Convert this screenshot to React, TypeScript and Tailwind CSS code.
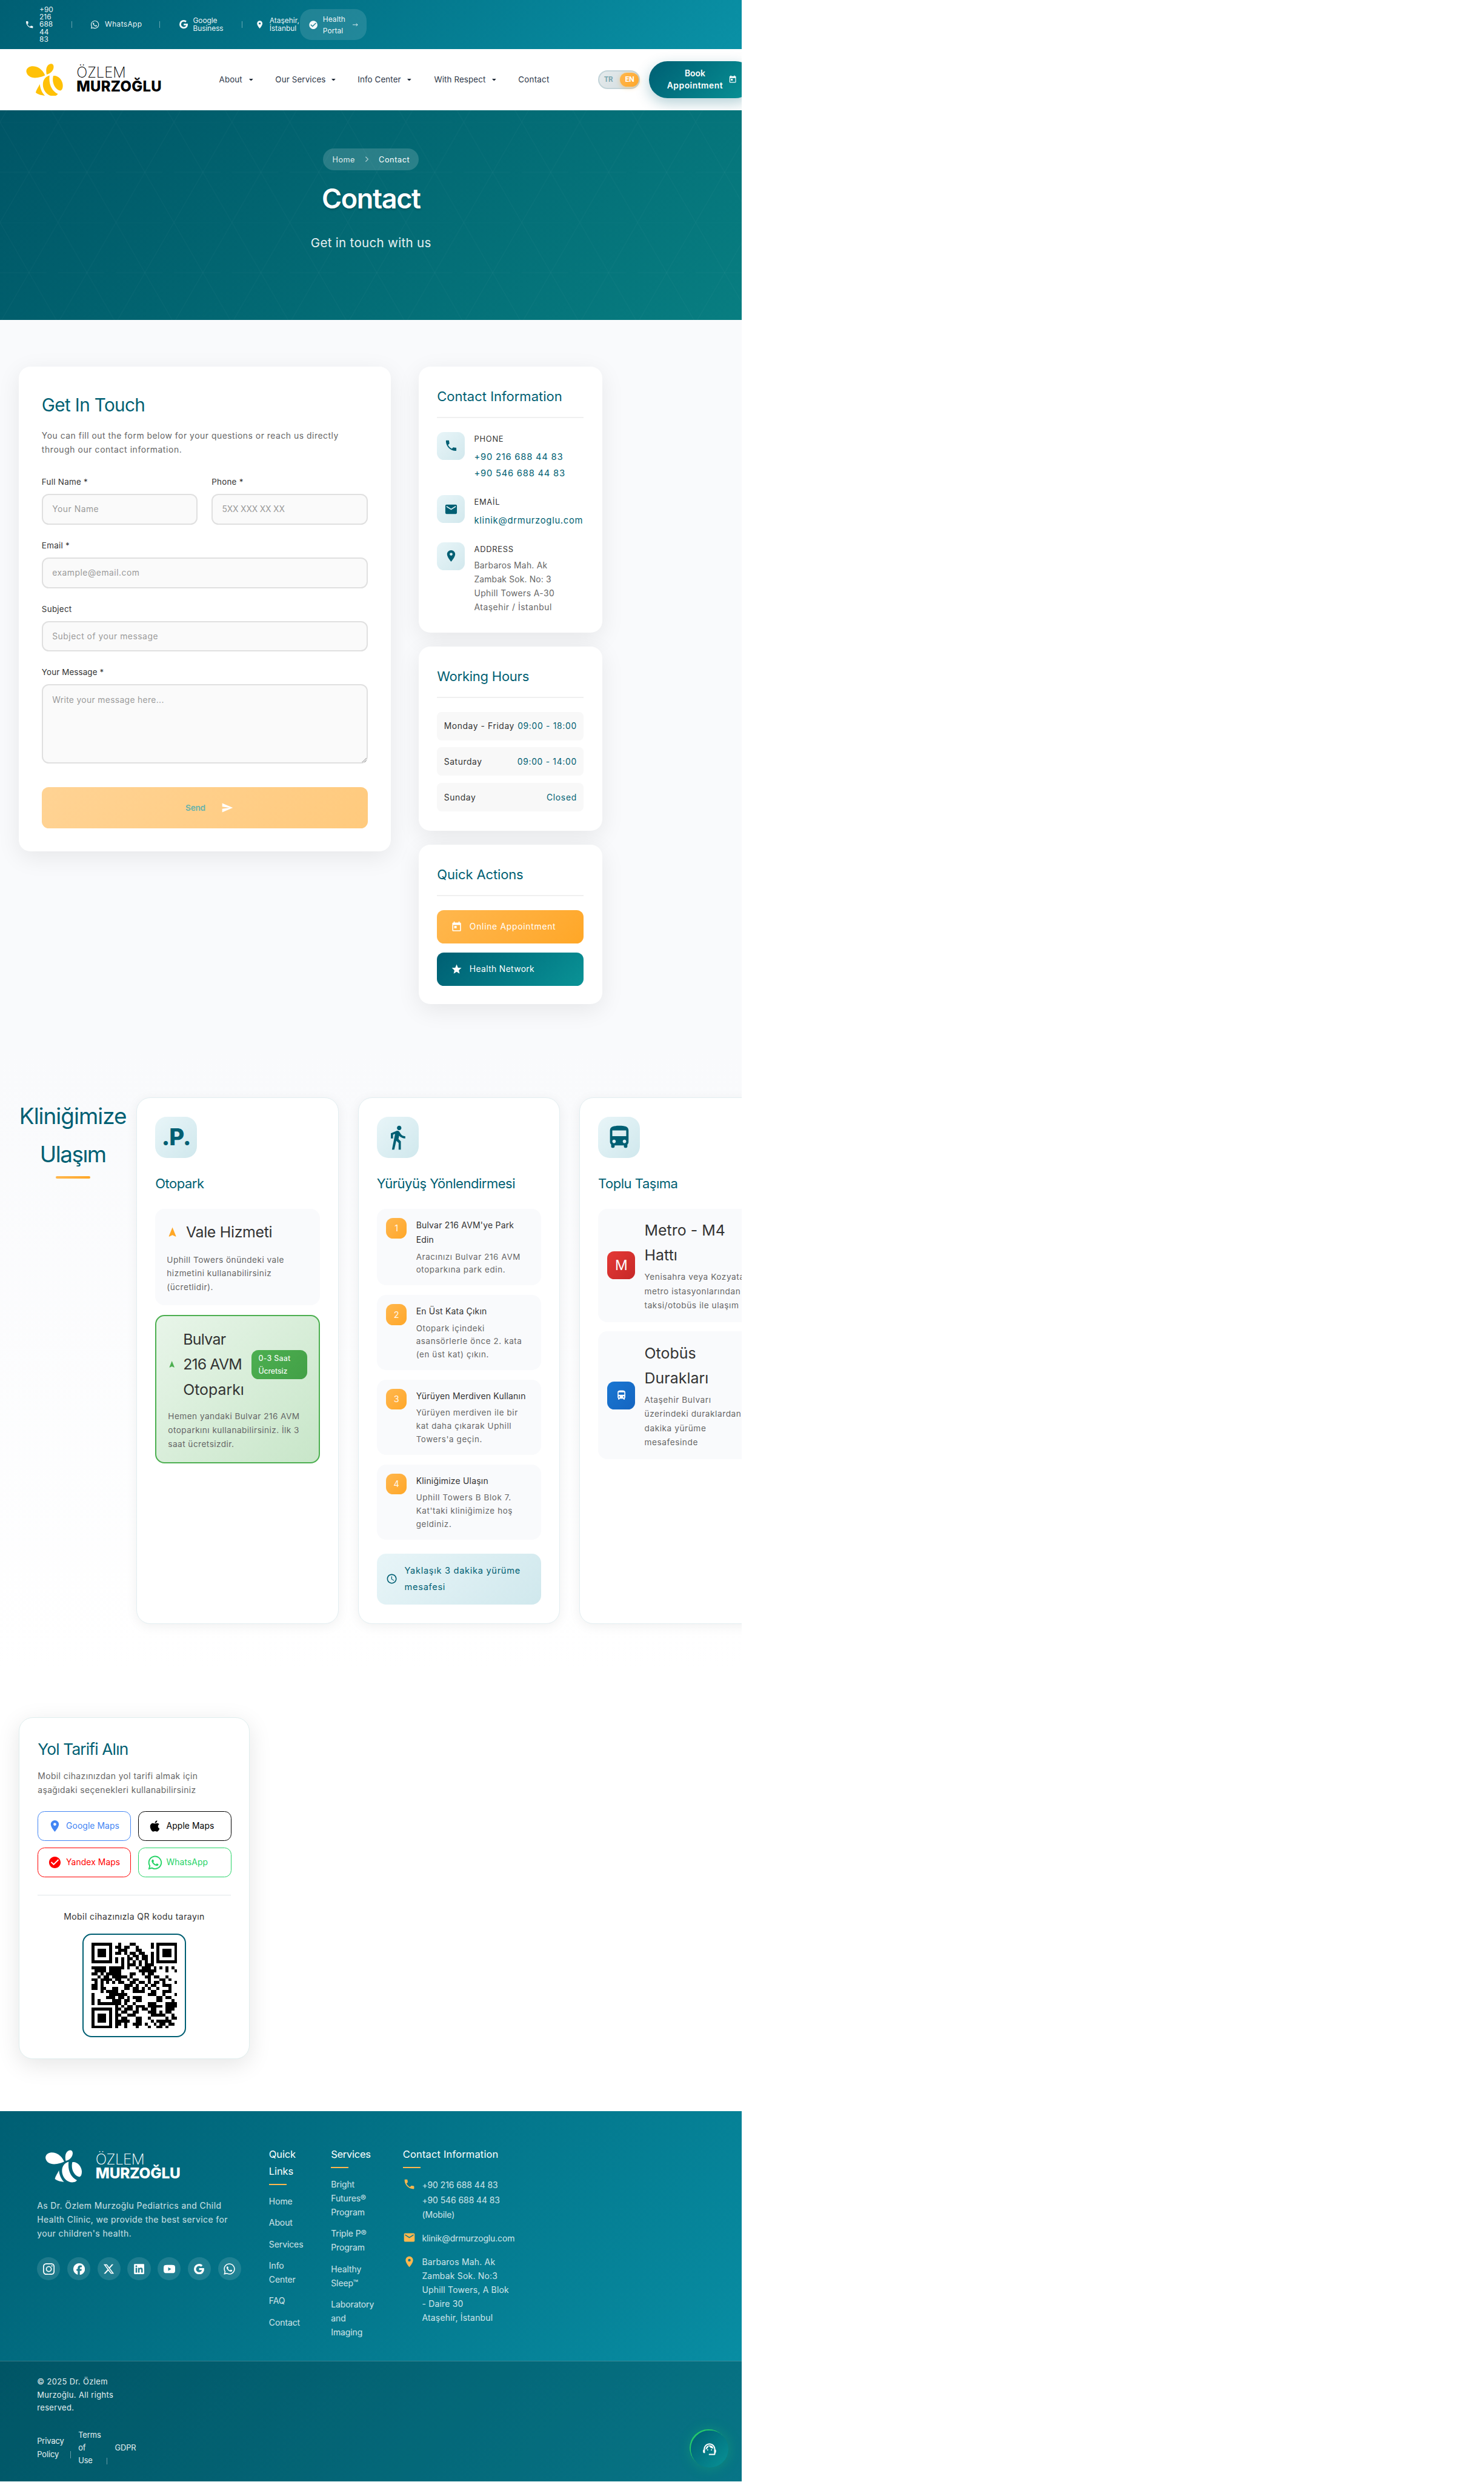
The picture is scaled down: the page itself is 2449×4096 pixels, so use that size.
import type { ReactNode } from 'react';
import {
  MdPhone, MdEmail, MdLocationOn, MdToday, MdSend, MdStar, MdCheckCircle, MdNavigation,
  MdDirectionsWalk, MdDirectionsBus, MdSupportAgent, MdAccessTime,
} from 'react-icons/md';
import { FaWhatsapp, FaXTwitter, FaLinkedin, FaApple } from 'react-icons/fa6';
import { BsGoogle } from 'react-icons/bs';
import { SiInstagram, SiFacebook, SiYoutube } from 'react-icons/si';

/** One unbroken line of text. */
function T({ c = '', children }: { c?: string; children: ReactNode }) {
  return <span className={'block w-max whitespace-nowrap ' + c}>{children}</span>;
}

function Lines({ items }: { items: string[] }) {
  return <>{items.map((t) => <T key={t}>{t}</T>)}</>;
}

function Bee({ className }: { className: string }) {
  return (
    <svg viewBox="0 0 189 167" className={'shrink-0 ' + className} fill="currentColor">
      <path d="M97 60C80 20 45 10 25 14C8 17-2 30 1 44C5 62 22 73 45 73C65 73 85 66 97 60Z" />
      <path d="M105 56C100 35 103 12 118 4C130-3 142 2 141 18C140 36 125 52 105 56Z" />
      <path d="M120 61C92 68 82 95 87 120C93 150 120 172 148 166C155 165 160 160 163 156C130 140 115 105 120 61Z" />
      <path d="M139 63C160 58 185 80 188 108C189 125 185 135 176 139C150 135 130 100 139 63Z" />
      <path d="M70 105C60 125 50 138 49 150C62 160 80 164 96 165C82 150 72 130 70 105Z" />
    </svg>
  );
}

const qrRows = [
  '11111110010001100000101111111',
  '10000010110110010000101000001',
  '10111010011100011000001011101',
  '10111010110101101100101011101',
  '10111010000010110110101011101',
  '10000010101011010110101000001',
  '11111110101010101010101111111',
  '00000000001011101011100000000',
  '11111011111010010111010101010',
  '01111011110000001111110001001',
  '11010111110001100101100000000',
  '00101101111101000011011001000',
  '11011110110010110001000110100',
  '01010101011001101101011010001',
  '11010000000111010010110011100',
  '11011001100110110101001000100',
  '00010111101000111100110011100',
  '10000011111100000001110010001',
  '10000111011010111000001101100',
  '10100001110110011000001100010',
  '10111111110100100001110001111',
  '00000000101011011101111101111',
  '11111110110111010110110001110',
  '10000010101100110001110101100',
  '10111010110011100000111110010',
  '10111010101100011001000001011',
  '10111010111110011000101111100',
  '10000010110100111010010110110',
  '11111110100100010001001101000',
];

function Qr() {
  return (
    <svg viewBox="0 0 29 29" className="size-[148px]" shapeRendering="crispEdges">
      {qrRows.flatMap((r, y) => [...r].map((v, x) => (v === '1' ? <rect key={`${x}-${y}`} x={x} y={y} width="1" height="1" /> : null)))}
    </svg>
  );
}

const cardShadow = 'shadow-[0_10px_40px_rgba(0,0,0,0.08)]';

function TopBar() {
  return (
    <div className="flex h-[85px] items-center bg-linear-135 from-[#005f73] to-[#0a91a6] text-[12.5px] leading-[13px] text-white/95">
      <div className="ml-[43px] flex w-[80px] items-center gap-[9px]">
        <MdPhone size={16} />
        <div><Lines items={['+90', '216', '688', '44', '83']} /></div>
      </div>
      <div className="h-[12px] w-px bg-white/40" />
      <div className="ml-[32px] flex w-[119px] items-center gap-[9px]">
        <FaWhatsapp size={16} />
        <T c="tracking-[0.029em]">WhatsApp</T>
      </div>
      <div className="h-[12px] w-px bg-white/40" />
      <div className="ml-[33px] flex w-[108px] items-center gap-[9px]">
        <BsGoogle size={15} />
        <div className="tracking-[-0.006em]"><Lines items={['Google', 'Business']} /></div>
      </div>
      <div className="h-[12px] w-px bg-white/40" />
      <div className="ml-[22px] flex w-[77px] items-center gap-[9px]">
        <MdLocationOn size={16} className="shrink-0" />
        <div><Lines items={['Ataşehir,', 'İstanbul']} /></div>
      </div>
      <div className="flex h-[53px] w-[116px] items-center rounded-[20px] bg-white/12 pl-[15px] leading-[20px]">
        <MdCheckCircle size={17} />
        <div className="ml-[8px] w-[52px] tracking-[0.008em]"><Lines items={['Health', 'Portal']} /></div>
        <svg viewBox="0 0 9 6" className="w-[9px]" fill="none" stroke="currentColor" strokeWidth="0.9"><path d="M0 3H8.5M6 0.7L8.5 3L6 5.3" /></svg>
      </div>
    </div>
  );
}

function NavItem({ cell, label, arrow = true }: { cell: string; label: string; arrow?: boolean }) {
  return (
    <div className={'flex items-center justify-between ' + cell}>
      <T>{label}</T>
      {arrow && <svg viewBox="0 0 7 4" className="w-[7px]" fill="#1f2937"><path d="M0 0H7L3.5 4Z" /></svg>}
    </div>
  );
}

function Header() {
  return (
    <div className="flex h-[105px] items-center bg-white">
      <Bee className="ml-[45px] h-[56px] w-[64px] text-[#ffc107]" />
      <div className="ml-[23px] w-[222px] shrink-0 text-[25px] leading-[23.7px] text-black">
        <T c="font-extralight tracking-[-0.004em]">ÖZLEM</T>
        <T c="font-extrabold tracking-[0.011em]">MURZOĞLU</T>
      </div>
      <div className="ml-[24px] flex w-[654px] shrink-0 text-[14px] leading-[24px] tracking-[0.008em] text-[#2d3748]">
        <NavItem cell="w-[59px] mr-[38px]" label="About" />
        <NavItem cell="w-[104px] mr-[38px]" label="Our Services" />
        <NavItem cell="w-[93px] mr-[39px]" label="Info Center" />
        <NavItem cell="w-[107px] mr-[38px]" label="With Respect" />
        <NavItem cell="w-[60px] tracking-[0.02em]" label="Contact" arrow={false} />
      </div>
      <div className="flex h-[32px] w-[72px] shrink-0 items-center justify-between rounded-full border-[2.1px] border-[#c3d4d9] bg-linear-135 from-[#e6ebed] to-[#cfdadd] pl-[8px] text-[12px] font-bold tracking-[-0.045em]">
        <T c="text-[#7fa8b1]">TR</T>
        <div className="flex h-[24px] w-[32px] items-center justify-center rounded-[12px] bg-linear-135 from-[#ffb74d] to-[#ffa726] text-white shadow-[0_2px_8px_rgba(255,167,38,0.4)]"><T>EN</T></div>
      </div>
      <div className="ml-[16px] flex h-[64px] w-[180px] shrink-0 items-center rounded-[32px] bg-linear-135 from-[#005f73] to-[#0a9396] pl-[31px] text-[14.5px] leading-[20px] font-semibold text-white shadow-[0_8px_24px_rgba(0,95,115,0.3)]">
        <div className="flex w-[96px] flex-col items-center"><T>Book</T><T c="tracking-[0.036em]">Appointment</T></div>
        <MdToday size={15} className="ml-[10px]" />
      </div>
    </div>
  );
}

function Hero() {
  return (
    <div className="relative flex h-[362px] flex-col items-center bg-linear-135 from-[#005566] to-[#087e81] pt-[66px] text-white">
      <svg className="absolute inset-0 h-full w-full">
        <defs>
          <pattern id="tri" width="100" height="173.2" patternUnits="userSpaceOnUse" patternTransform="translate(0 20.4)">
            <path d="M0 0H80M0 86.6H80M0 0L50 86.6L100 0M0 173.2L50 86.6L100 173.2" fill="none" stroke="#fff" strokeOpacity="0.035" />
          </pattern>
        </defs>
        <rect width="100%" height="100%" fill="url(#tri)" />
      </svg>
      <div className="relative flex h-[38px] w-[165px] items-center rounded-[20px] bg-white/16 pl-[16px] text-[13.3px] tracking-[0.032em]">
        <T c="text-white/85">Home</T>
        <svg viewBox="0 0 8 12" className="ml-[17px] h-[10px] w-[7px]" fill="none" stroke="#fff" strokeOpacity="0.6" strokeWidth="1.6"><path d="M1.5 1L6.5 6L1.5 11" /></svg>
        <T c="ml-[17px] tracking-[0.045em]">Contact</T>
      </div>
      <div className="relative mt-[14px] text-[47px] leading-[70px] font-semibold tracking-[-0.03em] [text-shadow:0_2px_4px_rgba(0,0,0,0.2)]"><T>Contact</T></div>
      <div className="relative mt-[23.5px] text-[21.5px] leading-[36px] tracking-[0.015em] text-white/90"><T>Get in touch with us</T></div>
    </div>
  );
}

function Field({ label, ph, className = '', phClass = 'tracking-[0.037em]' }: { label: string; ph: string; className?: string; phClass?: string }) {
  return (
    <div className={className}>
      <div className="text-[14px] leading-[24.4px] tracking-[0.02em] text-[#333]"><T>{label}</T></div>
      <div className="mt-[8px] flex h-[53px] items-center rounded-[12px] border-[2.1px] border-[#e0e0e0] bg-[#fafafa] pl-[16px] text-[14.5px] text-[#9a9a9a]"><T c={phClass}>{ph}</T></div>
    </div>
  );
}

function FormCard() {
  return (
    <div className={'h-[837px] w-[642px] rounded-[20px] bg-white px-[40px] pt-[46px] ' + cardShadow}>
      <div className="text-[31px] leading-[40px] tracking-[-0.021em] text-[#005f73]"><T>Get In Touch</T></div>
      <div className="mt-[22px] text-[14.5px] leading-[24px] tracking-[0.038em] text-[#666]">
        <T>You can fill out the form below for your questions or reach us directly</T>
        <T c="tracking-[0.044em]">through our contact information.</T>
      </div>
      <div className="mt-[32px] flex gap-[24px]">
        <Field className="flex-1" label="Full Name *" ph="Your Name" />
        <Field className="flex-1" label="Phone *" ph="5XX XXX XX XX" phClass="tracking-[-0.011em]" />
      </div>
      <Field className="mt-[24px]" label="Email *" ph="example@email.com" />
      <Field className="mt-[24px]" label="Subject" ph="Subject of your message" />
      <div className="mt-[24px] text-[14px] leading-[24.4px] tracking-[0.009em] text-[#333]"><T>Your Message *</T></div>
      <div className="relative mt-[8px] h-[137px] rounded-[12px] border-[2.1px] border-[#e0e0e0] bg-[#fafafa] pt-[13px] pl-[16px] text-[14.5px] leading-[24px] tracking-[0.024em] text-[#9a9a9a]">
        <T>Write your message here...</T>
        <svg viewBox="0 0 8 8" className="absolute right-0 bottom-0 size-[8px]" stroke="#888" fill="none"><path d="M0 8L8 0M4 8L8 4" /></svg>
      </div>
      <div className="mt-[40px] flex h-[72px] items-center rounded-[12px] bg-linear-135 from-[#ffd394] to-[#ffca7d] pl-[248px] text-[14.3px] font-semibold tracking-[-0.024em] text-[#66b3ac]">
        <T>Send</T>
        <MdSend size={21} className="ml-[28px] text-white" />
      </div>
    </div>
  );
}

function SideCard({ title, className, children }: { title: string; className: string; children: ReactNode }) {
  return (
    <div className={'w-[317px] rounded-[20px] bg-white px-[32px] pt-[33px] ' + cardShadow + ' ' + className}>
      <div className="mb-[24px] h-[56px] border-b-[2.1px] border-[#f0f0f0] text-[23px] leading-[38px] text-[#005f73]"><T>{title}</T></div>
      {children}
    </div>
  );
}

function InfoRow({ icon, label, children }: { icon: ReactNode; label: string; children: ReactNode }) {
  return (
    <div className="mb-[23.3px] flex gap-[16px]">
      <div className="flex size-[48px] shrink-0 items-center justify-center rounded-[12px] bg-linear-135 from-[#e8f5f8] to-[#d2e8ed] text-[#005f73]">{icon}</div>
      <div>
        <div className="mb-[6px] text-[13.5px] leading-[24px] tracking-[0.057em] text-[#333]"><T>{label}</T></div>
        {children}
      </div>
    </div>
  );
}

function HoursRow({ day, time }: { day: string; time: string }) {
  return (
    <div className="mb-[12px] flex h-[49.3px] items-center justify-between rounded-[8px] bg-[#f8f8f8] px-[12px] pt-[1px] text-[14.5px]">
      <T c="tracking-[0.042em] text-[#333]">{day}</T>
      <T c="tracking-[0.05em] text-[#005f73]">{time}</T>
    </div>
  );
}

function ContactSection() {
  return (
    <div className="flex h-[1260px] gap-[48px] bg-[#f9fafc] pt-[80px] pl-[32px]">
      <FormCard />
      <div className="flex flex-col gap-[24px]">
        <SideCard title="Contact Information" className="h-[459px]">
          <InfoRow icon={<MdPhone size={24} />} label="PHONE">
            <div className="text-[15.5px] leading-[28px] tracking-[0.05em] text-[#005f73]"><Lines items={['+90 216 688 44 83', '+90 546 688 44 83']} /></div>
          </InfoRow>
          <InfoRow icon={<MdEmail size={24} />} label="EMAİL">
            <div className="text-[15.5px] leading-[28px] tracking-[0.047em] text-[#005f73]"><T>klinik@drmurzoglu.com</T></div>
          </InfoRow>
          <InfoRow icon={<MdLocationOn size={24} />} label="ADDRESS">
            <div className="-mt-[2px] text-[14.5px] leading-[24px] text-[#666]">
              <T c="tracking-[0.019em]">Barbaros Mah. Ak</T>
              <T c="tracking-[0.012em]">Zambak Sok. No: 3</T>
              <T c="tracking-[0.03em]">Uphill Towers A-30</T>
              <T c="tracking-[0.038em]">Ataşehir / İstanbul</T>
            </div>
          </InfoRow>
        </SideCard>
        <SideCard title="Working Hours" className="h-[318px] tracking-[-0.016em]">
          <HoursRow day="Monday - Friday" time="09:00 - 18:00" />
          <HoursRow day="Saturday" time="09:00 - 14:00" />
          <HoursRow day="Sunday" time="Closed" />
        </SideCard>
        <SideCard title="Quick Actions" className="h-[275px] tracking-[-0.009em]">
          <div className="flex h-[57.5px] items-center gap-[12px] rounded-[12px] bg-linear-135 from-[#ffb74d] to-[#ffa726] pl-[24px] text-[14.5px] tracking-[0.052em] text-white">
            <MdToday size={20} /><T>Online Appointment</T>
          </div>
          <div className="mt-[16px] flex h-[57.5px] items-center gap-[12px] rounded-[12px] bg-linear-135 from-[#005f73] to-[#0a9396] pl-[24px] text-[14.5px] tracking-[0.026em] text-white">
            <MdStar size={20} /><T>Health Network</T>
          </div>
        </SideCard>
      </div>
    </div>
  );
}

function AccessCard({ icon, title, children }: { icon: ReactNode; title: string; children: ReactNode }) {
  return (
    <div className="h-[908px] w-[349px] shrink-0 rounded-[24px] border border-[#e2eef1] bg-white px-[31.5px] pt-[32px] shadow-[0_4px_20px_rgba(0,0,0,0.06)]">
      <div className="flex size-[72px] items-center justify-center rounded-[20px] bg-linear-135 from-[#e8f5f8] to-[#d0e8ed] text-[#005f73]">{icon}</div>
      <div className="mt-[24px] mb-[23px] text-[23px] leading-[40px] tracking-[-0.022em] text-[#005f73]"><T>{title}</T></div>
      {children}
    </div>
  );
}

function Step({ n, h, title, desc }: { n: string; h: string; title: string[]; desc: string[] }) {
  return (
    <div className={'mb-[16.4px] flex gap-[16px] rounded-[16px] bg-[#f9fafc] p-[16px] ' + h}>
      <div className="flex size-[36px] shrink-0 items-center justify-center rounded-[12px] bg-linear-135 from-[#ffb74d] to-[#ffa726] text-[15px] text-white/90">{n}</div>
      <div>
        <div className="text-[14.6px] leading-[25.6px] tracking-[0.015em] text-[#333]"><Lines items={title} /></div>
        <div className="mt-[5px] text-[14px] leading-[22.8px] tracking-[0.047em] text-[#666]"><Lines items={desc} /></div>
      </div>
    </div>
  );
}

function Transit({ badge, h, title, desc }: { badge: ReactNode; h: string; title: string[]; desc: string[] }) {
  return (
    <div className={'mb-[16px] flex items-center gap-[16px] rounded-[16px] bg-[#f9fafc] pl-[16px] ' + h}>
      {badge}
      <div>
        <div className="text-[26px] leading-[43px] tracking-[0.002em] text-[#333]"><Lines items={title} /></div>
        <div className="mt-[4px] text-[14.3px] leading-[24.5px] tracking-[0.04em] text-[#666]"><Lines items={desc} /></div>
      </div>
    </div>
  );
}

function AccessSection() {
  return (
    <div className="flex h-[1069px] bg-linear-to-b from-[#f9fafc] to-white pt-[81px] pl-[32px]">
      <div className="mr-[16px] flex w-[187.3px] shrink-0 flex-col items-center text-[38.5px] leading-[65.5px] text-[#005f73]">
        <T c="tracking-[-0.026em]">Kliniğimize</T><T c="tracking-[-0.039em]">Ulaşım</T>
        <div className="mt-[5px] h-[4px] w-[60px] rounded-full bg-linear-to-r from-[#ffb74d] to-[#ffa726]" />
      </div>
      <div className="flex gap-[33px]">
        <AccessCard icon={<span className="text-[40px] font-extrabold tracking-tight">.P.</span>} title="Otopark">
          <div className="h-[167px] rounded-[16px] bg-[#f9fafc] px-[20px] pt-[19.5px]">
            <div className="flex items-center gap-[13px] text-[26px] leading-[43.3px] tracking-[-0.012em] text-[#333]"><MdNavigation size={20} className="text-[#ffa726]" /><T>Vale Hizmeti</T></div>
            <div className="mt-[13.5px] text-[14.3px] leading-[23.9px] tracking-[0.034em] text-[#666]"><Lines items={['Uphill Towers önündeki vale', 'hizmetini kullanabilirsiniz', '(ücretlidir).']} /></div>
          </div>
          <div className="mt-[16px] h-[257px] rounded-[16px] border-[2.1px] border-[#4caf50] bg-linear-135 from-[#e8f5e9] to-[#c8e6c9] px-[20px] pt-[19px]">
            <div className="flex items-center text-[26px] leading-[43.4px] text-[#333]">
              <MdNavigation size={14} className="text-[#4caf50]" />
              <div className="ml-[12px] w-[118px]"><T c="tracking-[-0.027em]">Bulvar</T><T c="tracking-[-0.035em]">216 AVM</T><T>Otoparkı</T></div>
              <div className="h-[51px] w-[96px] rounded-[12px] bg-linear-135 from-[#4caf50] to-[#43a047] pt-[3.5px] pl-[12px] text-[13px] leading-[22px] font-medium text-white/95"><T c="tracking-[0.02em]">0-3 Saat</T><T c="tracking-[-0.013em]">Ücretsiz</T></div>
            </div>
            <div className="mt-[12px] text-[14.3px] leading-[23.9px] tracking-[0.032em] text-[#666]"><Lines items={['Hemen yandaki Bulvar 216 AVM', 'otoparkını kullanabilirsiniz. İlk 3', 'saat ücretsizdir.']} /></div>
          </div>
        </AccessCard>
        <AccessCard icon={<MdDirectionsWalk size={46} />} title="Yürüyüş Yönlendirmesi">
          <Step n="1" h="h-[132.5px]" title={["Bulvar 216 AVM'ye Park", 'Edin']} desc={['Aracınızı Bulvar 216 AVM', 'otoparkına park edin.']} />
          <Step n="2" h="h-[129.5px]" title={['En Üst Kata Çıkın']} desc={['Otopark içindeki', 'asansörlerle önce 2. kata', '(en üst kat) çıkın.']} />
          <Step n="3" h="h-[130px]" title={['Yürüyen Merdiven Kullanın']} desc={['Yürüyen merdiven ile bir', 'kat daha çıkarak Uphill', "Towers'a geçin."]} />
          <Step n="4" h="h-[130px]" title={['Kliniğimize Ulaşın']} desc={['Uphill Towers B Blok 7.', "Kat'taki kliniğimize hoş", 'geldiniz.']} />
          <div className="mt-[24px] flex h-[88px] items-center gap-[12px] rounded-[16px] bg-linear-135 from-[#e8f5f8] to-[#d0e8ed] pl-[16px] text-[15.3px] leading-[28px] tracking-[0.047em] text-[#005f73]">
            <MdAccessTime size={20} /><div><Lines items={['Yaklaşık 3 dakika yürüme', 'mesafesi']} /></div>
          </div>
        </AccessCard>
        <AccessCard icon={<MdDirectionsBus size={48} />} title="Toplu Taşıma">
          <Transit
            h="h-[196px]"
            badge={<div className="flex size-[48px] shrink-0 items-center justify-center rounded-[12px] bg-linear-135 from-[#e53935] to-[#c62828] text-[24px] text-white">M</div>}
            title={['Metro - M4', 'Hattı']}
            desc={['Yenisahra veya Kozyatağı', 'metro istasyonlarından', 'taksi/otobüs ile ulaşım']}
          />
          <Transit
            h="h-[220px]"
            badge={<div className="flex size-[48px] shrink-0 items-center justify-center rounded-[12px] bg-linear-135 from-[#1976d2] to-[#1565c0] text-white"><MdDirectionsBus size={20} /></div>}
            title={['Otobüs', 'Durakları']}
            desc={['Ataşehir Bulvarı', 'üzerindeki duraklardan 2', 'dakika yürüme', 'mesafesinde']}
          />
        </AccessCard>
      </div>
    </div>
  );
}

function MapButton({ icon, label, color }: { icon: ReactNode; label: string; color: string }) {
  return (
    <div className={'flex h-[51px] w-[161px] items-center gap-[8px] rounded-[12px] border pl-[16px] text-[14.5px] tracking-[0.006em] ' + color}>
      <span className="flex w-[24px] justify-center">{icon}</span><T>{label}</T>
    </div>
  );
}

function DirectionsSection() {
  return (
    <div className="h-[761px] bg-white pt-[81px] pl-[32px]">
      <div className="h-[590px] w-[399px] rounded-[24px] border border-[#dfeeee] bg-white px-[32px] pt-[32px] shadow-[0_10px_40px_rgba(0,0,0,0.1)]">
        <div className="text-[27.5px] leading-[46px] tracking-[-0.032em] text-[#005f73]"><T>Yol Tarifi Alın</T></div>
        <div className="mt-[11.5px] text-[14.5px] leading-[24px] tracking-[0.03em] text-[#666]"><Lines items={['Mobil cihazınızdan yol tarifi almak için', 'aşağıdaki seçenekleri kullanabilirsiniz']} /></div>
        <div className="mt-[24px] grid grid-cols-[161px_161px] gap-[12px]">
          <MapButton icon={<MdLocationOn size={24} />} label="Google Maps" color="border-[#4285f4] text-[#4285f4]" />
          <MapButton icon={<FaApple size={22} />} label="Apple Maps" color="border-black text-black" />
          <MapButton icon={<MdCheckCircle size={24} />} label="Yandex Maps" color="border-[#ff0000] text-[#ff0000]" />
          <MapButton icon={<FaWhatsapp size={27} className="shrink-0" />} label="WhatsApp" color="border-[#25d366] text-[#25d366]" />
        </div>
        <div className="mt-[30.5px] flex flex-col items-center border-t border-[#dfe6e9] pt-[24px]">
          <div className="text-[14.7px] leading-[26px] tracking-[0.028em] text-[#333]"><T>Mobil cihazınızla QR kodu tarayın</T></div>
          <div className="mt-[16px] flex size-[178px] items-center justify-center rounded-[16px] border-[2.1px] border-[#005f73]"><Qr /></div>
        </div>
      </div>
    </div>
  );
}

function FooterHead({ lines, className = 'tracking-[-0.018em]' }: { lines: string[]; className?: string }) {
  return (
    <div className={'mb-[17px] text-[17.3px] leading-[29px] text-white ' + className}>
      <Lines items={lines} />
      <div className="mt-[6px] h-[2.1px] w-[30px] bg-[#ffb74d]" />
    </div>
  );
}

function FooterLinks({ items }: { items: string[][] }) {
  return (
    <div className="flex flex-col gap-[13px] tracking-[-0.006em]">
      {items.map((g) => <div key={g[0]}><Lines items={g} /></div>)}
    </div>
  );
}

function Footer() {
  const social = [<SiInstagram />, <SiFacebook />, <FaXTwitter />, <FaLinkedin />, <SiYoutube />, <BsGoogle className="size-[18px]" />, <FaWhatsapp size={22} />];
  return (
    <div className="h-[639px] bg-linear-135 from-[#005f73] to-[#0a93a9] text-white">
      <div className="flex h-[431px] pl-[64px] text-[14.6px] leading-[24px] text-white/80">
        <div className="w-[400px] pt-[67px]">
          <div className="flex items-center pl-[14px] text-white">
            <Bee className="h-[56px] w-[63px]" />
            <div className="ml-[24px] text-[25.6px] leading-[23.7px]"><T c="font-extralight tracking-[-0.027em]">ÖZLEM</T><T c="font-extrabold tracking-[-0.011em]">MURZOĞLU</T></div>
          </div>
          <div className="mt-[29px] tracking-[0.029em]"><Lines items={['As Dr. Özlem Murzoğlu Pediatrics and Child', 'Health Clinic, we provide the best service for', "your children's health."]} /></div>
          <div className="mt-[28px] flex gap-[12px]">
            {social.map((s, i) => <div key={i} className="flex size-[40px] items-center justify-center rounded-full bg-white/12 text-[20px] text-white">{s}</div>)}
          </div>
        </div>
        <div className="w-[107px] pt-[61px]">
          <FooterHead lines={['Quick', 'Links']} className="tracking-[-0.01em]" />
          <FooterLinks items={[['Home'], ['About'], ['Services'], ['Info', 'Center'], ['FAQ'], ['Contact']]} />
        </div>
        <div className="w-[124px] pt-[61px]">
          <FooterHead lines={['Services']} />
          <FooterLinks items={[['Bright', 'Futures®', 'Program'], ['Triple P®', 'Program'], ['Healthy', 'Sleep™'], ['Laboratory', 'and', 'Imaging']]} />
        </div>
        <div className="w-[260px] pt-[61px]">
          <FooterHead lines={['Contact Information']} className="tracking-[0.008em]" />
          <div className="flex gap-[11px]"><MdPhone size={22} className="text-[#ffb74d]" /><div className="leading-[25.5px] tracking-[-0.005em]"><Lines items={['+90 216 688 44 83', '+90 546 688 44 83', '(Mobile)']} /></div></div>
          <div className="mt-[15.5px] flex gap-[11px]"><MdEmail size={22} className="text-[#ffb74d]" /><div className="leading-[25.5px] tracking-[-0.009em]"><T>klinik@drmurzoglu.com</T></div></div>
          <div className="mt-[16px] flex gap-[11px]"><MdLocationOn size={22} className="text-[#ffb74d]" /><div className="tracking-[0.015em]"><Lines items={['Barbaros Mah. Ak', 'Zambak Sok. No:3', 'Uphill Towers, A Blok', '- Daire 30', 'Ataşehir, İstanbul']} /></div></div>
        </div>
      </div>
      <div className="h-[208px] border-t border-white/20 bg-black/20 pt-[24px] pl-[64px] text-[13.5px] leading-[22.5px] tracking-[0.03em] text-white/90">
        <Lines items={['© 2025 Dr. Özlem', 'Murzoğlu. All rights', 'reserved.']} />
        <div className="mt-[24px] flex items-center leading-[22.1px] tracking-[-0.008em]">
          <div className="flex w-[71px] items-end"><div className="w-[57px]"><Lines items={['Privacy', 'Policy']} /></div><div className="mb-[4px] h-[12px] w-px bg-white/40" /></div>
          <div className="flex w-[63px] items-end"><div className="w-[49px]"><Lines items={['Terms', 'of', 'Use']} /></div><div className="mb-[4px] h-[12px] w-px bg-white/40" /></div>
          <T>GDPR</T>
        </div>
      </div>
    </div>
  );
}

export default function App() {
  return (
    <div className="h-[4096px] w-[2449px] overflow-hidden bg-white">
      <div className="relative w-[1280px] overflow-hidden font-['Inter',sans-serif] [zoom:0.95664]">
        <TopBar />
        <Header />
        <Hero />
        <ContactSection />
        <AccessSection />
        <DirectionsSection />
        <Footer />
        <div className="absolute top-[4193px] left-[1192px] flex size-[64px] items-center justify-center rounded-full bg-linear-135 from-[#005f73] to-[#0a9396] text-white shadow-[-2px_-2px_0_#25c96a,0_0_22px_rgba(37,211,102,0.3)]">
          <MdSupportAgent size={27} />
        </div>
      </div>
    </div>
  );
}
